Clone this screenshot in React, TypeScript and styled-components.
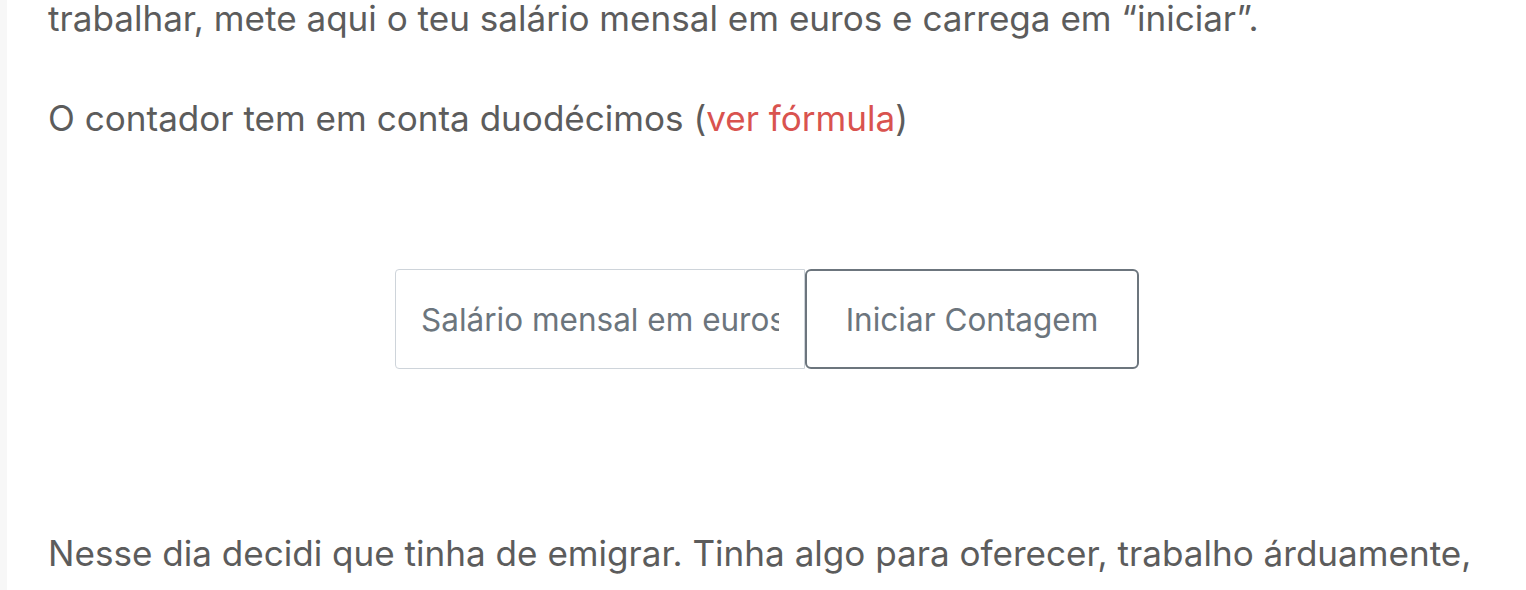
import React from "react";
import styled, { createGlobalStyle } from "styled-components";

const Global = createGlobalStyle`
  html, body { margin: 0; padding: 0; background: #ffffff; }
  body {
    font-family: "Inter", "Open Sans", sans-serif;
    overflow: hidden;
  }
`;

const Page = styled.div`
  display: flex;
  min-height: 590px;
`;

const SideStrip = styled.div`
  width: 7px;
  flex: 0 0 7px;
  background: #f7f7f7;
`;

const Content = styled.main`
  flex: 1;
  padding: 0 40px 0 41px;
  color: #5c5c5c;
`;

const Paragraph = styled.p<{ $top?: number; $bottom?: number }>`
  margin: ${(p) => p.$top ?? 0}px 0 ${(p) => p.$bottom ?? 0}px;
  font-size: 35.1px;
  line-height: 44px;
  white-space: nowrap;
`;

const FormulaLink = styled.a`
  color: #d9534f;
  text-decoration: none;
`;

const FormRow = styled.form`
  display: flex;
  justify-content: center;
  margin: 0;
`;

const SalaryInput = styled.input`
  box-sizing: border-box;
  width: 410px;
  height: 100px;
  padding: 0 25px;
  border: 1px solid #ced4da;
  border-radius: 4px 0 0 4px;
  font-family: inherit;
  font-size: 31.5px;
  color: #495057;
  outline: none;
  &::placeholder { color: #6c757d; opacity: 1; }
`;

const StartButton = styled.button`
  box-sizing: border-box;
  width: 334px;
  height: 100px;
  border: 2px solid #6c757d;
  border-radius: 6px;
  background: #ffffff;
  font-family: inherit;
  font-size: 31.5px;
  color: #6c757d;
  cursor: pointer;
`;

export default function App() {
  return (
    <>
      <Global />
      <Page>
        <SideStrip />
        <Content>
          <Paragraph $top={-4} $bottom={56}>
            trabalhar, mete aqui o teu salário mensal em euros e carrega em “iniciar”.
          </Paragraph>
          <Paragraph $bottom={129}>
            O contador tem em conta duodécimos (<FormulaLink href="#">ver fórmula</FormulaLink>)
          </Paragraph>
          <FormRow onSubmit={(e) => e.preventDefault()}>
            <SalaryInput type="text" placeholder="Salário mensal em euros" />
            <StartButton type="submit">Iniciar Contagem</StartButton>
          </FormRow>
          <Paragraph $top={162}>
            Nesse dia decidi que tinha de emigrar. Tinha algo para oferecer, trabalho árduamente,
          </Paragraph>
        </Content>
      </Page>
    </>
  );
}
